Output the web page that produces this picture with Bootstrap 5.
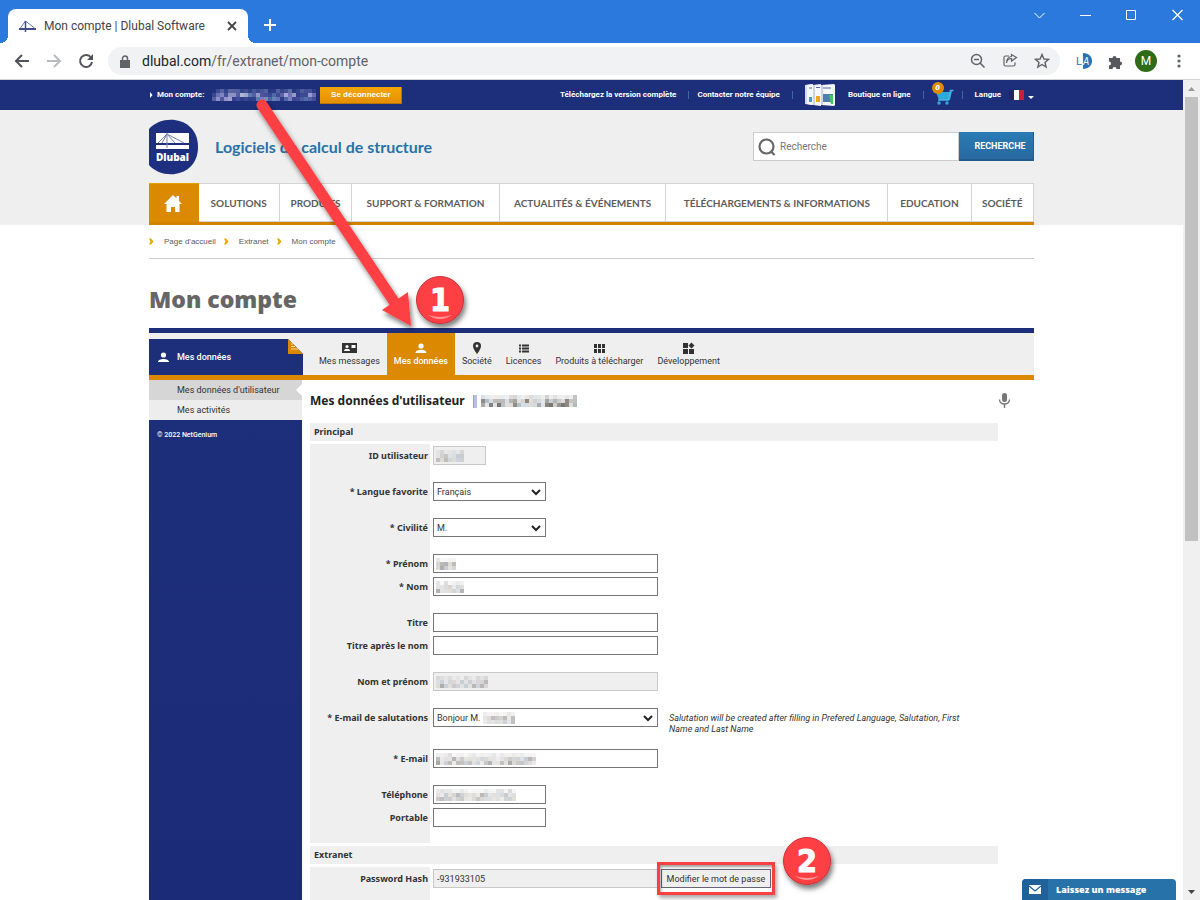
<!DOCTYPE html>
<html lang="fr">
<head>
<meta charset="utf-8">
<meta name="viewport" content="width=device-width, initial-scale=1">
<title>Mon compte | Dlubal Software</title>
<link href="https://cdn.jsdelivr.net/npm/bootstrap@5.3.0/dist/css/bootstrap.min.css" rel="stylesheet">
<style>
:root{--navy:#1d2e7b;--orange:#db8900;--pale:#efefef;--blue:#2872aa}
body{font-family:Roboto,"Liberation Sans",sans-serif;font-size:9px;line-height:12px;color:#333;height:100vh;overflow:hidden}
a{color:inherit;text-decoration:none}
svg{display:block;flex:none}
button{line-height:inherit}
.wrap{width:100%;max-width:885px;margin-left:auto;margin-right:auto}
/* browser frame */
.titlebar{background:#2b79dc;height:43px;padding-left:8px}
.win-tab{background:#fff;height:34px;width:240px;border-radius:8px 8px 0 0;font-size:12px;color:#444;padding:0 11px;position:relative}
.win-tab::before,.win-tab::after{content:"";position:absolute;bottom:0;width:8px;height:8px}
.win-tab::before{left:-8px;background:radial-gradient(circle at 0 0,#2b79dc 8px,#fff 8px)}
.win-tab::after{right:-8px;background:radial-gradient(circle at 100% 0,#2b79dc 8px,#fff 8px)}
.win-ctl{gap:35px;padding:8px 17px 0 0}
.plain{background:none;border:0;padding:0}
.toolbar{height:37px;border-bottom:1px solid #d5d5d5;color:#5f6368;padding:0 15px 0 14px}
.omnibox{background:#f0f2f4;height:28px;border-radius:14px;font-size:14px;padding:0 10px 0 12px;margin-left:14px}
.avatar{width:22px;height:22px;background:#2f6b18;font-size:12px;margin-left:12px}
/* page */
.topbar{background:var(--navy);height:30px;flex:none;color:#fff;font-weight:700;font-size:8px}
.divider{width:1px;height:8px;background:#3f66a8}
.btn-out{background:linear-gradient(#f5a606,#e58f02);border:0;border-bottom:1px solid #b87400;border-right:1px solid #b87400;width:82px;height:17px;color:#fff;font:700 8px "Liberation Sans",sans-serif}
.count{position:absolute;left:0;top:-3px;width:12px;height:12px;border-radius:50%;background:#df8b00;font-style:italic;line-height:12px}
.masthead{background:var(--pale);height:115px;flex:none}
.brand-row{height:73px}
.tagline{font:700 16px/20px Lato,sans-serif;color:var(--blue)}
.search{height:29px;width:281px}
.search-box{background:#fff;border:1px solid #ccc;padding-left:4px}
.search-box input{border:0;outline:0;font:400 10px Roboto,sans-serif;color:#555;min-width:0;background:none}
.search-box input::placeholder{color:#777}
.btn-search{background:linear-gradient(#2a7bb5,#2869a0);border:0;border-right:1px solid #215b8d;border-bottom:2px solid #215b8d;color:#fff;width:75px;font-weight:700;font-size:9px;padding:0 0 0 8px}
.mainnav{height:42px;background:#fff;border-bottom:3px solid #d28200;font:700 10px Lato,sans-serif;color:#5b5b5b}
.mainnav a{border:1px solid #d4d4d4;border-left:0;display:flex;align-items:center;justify-content:center;white-space:nowrap}
.mainnav a:first-child{background:var(--orange);border-color:#e9a000;border-right-color:var(--orange);border-bottom:0}
.crumbs{height:34px;border-bottom:1px solid #ccc;font:400 8px "Liberation Sans",sans-serif;color:#5a5a66}
.crumbs a{margin:0 8px 0 10px}
.page-title{font:800 23px/32px "Open Sans",sans-serif;color:#666;margin:0;padding:24px 0 13px}
.tabs{background:var(--pale);border-top:5px solid var(--navy);border-bottom:5px solid var(--orange);height:52px}
.side-head{width:154px;margin:6px 9px 0 0;background:var(--navy);color:#fff;font-weight:500;padding:0 9px;position:relative}
.side-head .fold{position:absolute;right:0;top:0}
.tabs .tab{padding:8px 7px 0;color:#333}
.tabs .tab.on{background:var(--orange);color:#fff;font-weight:500}
.side{width:153px;background:linear-gradient(#1d2e7b,#1b2b78);color:#fff}
.side a{display:flex;align-items:center;height:20px;padding-left:28px;background:#ededed;color:#333;position:relative}
.side a.on{background:#d6d6d6}
.side a.on::after{content:"";position:absolute;right:0;top:4px;border:6px solid transparent;border-right-color:#fff;border-left:0}
.copy{font-size:7px;font-weight:500;padding:9px 8px}
.content{padding:13px 36px 0 8px}
.heading-row{margin-bottom:14px}
.heading{font:700 12px/16px "Noto Sans",sans-serif;margin:0;color:#222}
.bartick{width:4px;height:13px;background:#b7c1e2;border-left:1px solid #d89a3c}
.band{background:var(--pale);height:18px;padding:0 4px;font:700 9px/17px "Noto Sans",sans-serif;margin:0 0 3px}
.sheet{background:linear-gradient(var(--pale),var(--pale)) 0 0/120px 100% no-repeat;padding:2px 0 16px;margin-bottom:3px}
.line{min-height:19px;display:flex;align-items:flex-start}
.line+.line{margin-top:17px}
.line+.line.near{margin-top:4px}
.line.tall{height:24px}
.line label{width:118px;margin-right:5px;text-align:right;font:700 9px/19px "Noto Sans",sans-serif;color:#333}
.field{position:relative;width:225px}
.field.half{width:113px}
.field.tiny{width:53px}
.field input,.field select{width:100%;height:19px;border:1px solid #767676;border-radius:0;padding:0 3px;font:400 9px Roboto,sans-serif;color:#333;display:block;background-color:#fff}
.field select{background-position:right 4px center;background-size:10px 8px;background-image:url("data:image/svg+xml,%3csvg xmlns='http://www.w3.org/2000/svg' viewBox='0 0 10 8'%3e%3cpath d='M1 2l4 4 4-4' fill='none' stroke='%23222' stroke-width='2'/%3e%3c/svg%3e")}
.field input[readonly]{background:#efefef;border-color:#c8c8c8}
.field .mosaic{position:absolute;left:3px;top:4px}
.field .mosaic.after-text{left:50px}
.hint{font-style:italic;line-height:11px;width:310px;padding-top:5px;margin-left:11px}
.pass-box{margin-left:3px}
.btn-pass{width:110px;height:19px;border:1px solid #667;background:#efefef;padding:0;color:#333;white-space:nowrap;display:block}
.frame{position:absolute;inset:-7px -4px;border:3px solid #f94144;box-shadow:2px 3px 4px #0005,inset 1px 2px 3px #0006;pointer-events:none}
.callouts{position:absolute;inset:0;pointer-events:none}
.chat{position:absolute;right:7px;bottom:0;width:154px;height:21px;background:var(--blue);border:0;border-radius:4px 4px 0 0;color:#fff;font:800 9px "Open Sans",sans-serif;padding:0;overflow:hidden}
.chat .ico{background:#1f6198;width:26px}
.scroll{width:17px;background:#f0f0f0;flex:none}
.thumb{width:13px;height:444px;background:#c1c1c1}
</style>
</head>
<body class="d-flex flex-column">

<header>
  <div class="titlebar d-flex align-items-end">
    <div class="win-tab d-flex align-items-center">
      <svg width="17" height="12" viewBox="0 0 17 12"><path d="M0 9h17" stroke="#414b8c" stroke-width="2"/><path d="M6.500 1v11M6.500 1L1 8.500M6.500 1l9 7" fill="none" stroke="#6a72a6"/><path d="M6.500 1v11" stroke="#414b8c" stroke-width="1.500"/></svg>
      <span class="ms-2">Mon compte | Dlubal Software</span>
      <button class="plain ms-auto" aria-label="Fermer l'onglet"><svg width="10" height="10"><path d="M1 1l8 8M9 1L1 9" stroke="#444" stroke-width="1.800"/></svg></button>
    </div>
    <button class="plain ms-3 mb-2 pb-1" aria-label="Nouvel onglet"><svg width="12" height="12"><path d="M6 0v12M0 6h12" stroke="#fff" stroke-width="2"/></svg></button>
    <div class="win-ctl d-flex ms-auto align-self-start align-items-center">
      <svg width="11" height="14"><path d="M.5 5l5 5 5-5" fill="none" stroke="#fff"/></svg>
      <svg width="11" height="14"><path d="M0 7.500h11" stroke="#fff"/></svg>
      <svg width="11" height="14"><path d="M.5 2.500h9v9h-9z" fill="none" stroke="#fff"/></svg>
      <svg width="11" height="14"><path d="M.5 2l10 10M10.500 2l-10 10" stroke="#fff" stroke-width="1.200"/></svg>
    </div>
  </div>
  <div class="toolbar d-flex align-items-center">
    <button class="plain" aria-label="Retour"><svg width="16" height="14"><path d="M15 7H2M8 1L2 7l6 6" fill="none" stroke="#50545a" stroke-width="2"/></svg></button>
    <button class="plain ms-3" aria-label="Avancer"><svg width="16" height="14"><path d="M1 7h13M8 1l6 6-6 6" fill="none" stroke="#b9bbbe" stroke-width="2"/></svg></button>
    <button class="plain ms-3" aria-label="Actualiser"><svg width="16" height="16"><path d="M13 4.500A6 6 0 1 0 14 9" fill="none" stroke="#50545a" stroke-width="2"/><path d="M15 1v6H9z" fill="#50545a"/></svg></button>
    <div class="omnibox d-flex align-items-center flex-grow-1">
      <svg width="10" height="13"><path d="M0 5h10v8H0z" fill="#5f6368"/><path d="M2.500 5V3.500a2.500 2.500 0 0 1 5 0V5" fill="none" stroke="#5f6368" stroke-width="1.500"/></svg>
      <span class="ms-2 ps-1"><span class="text-dark">dlubal.com</span>/fr/extranet/mon-compte</span>
      <div class="ms-auto d-flex gap-3">
        <svg width="16" height="16"><circle cx="6.500" cy="6.500" r="5" fill="none" stroke="#5f6368" stroke-width="1.500"/><path d="M4 6.500h5M10 10l4.500 4.500" stroke="#5f6368" stroke-width="1.600"/></svg>
        <svg width="16" height="16"><path d="M7 3H3.500A1.500 1.500 0 0 0 2 4.500v7A1.500 1.500 0 0 0 3.500 13h8a1.500 1.500 0 0 0 1.500-1.500V9.500M4.500 10c.5-3 2-4.500 5-4.500V8L14.500 4.500 9.500 1.500V3.500C6 4 4.500 6.500 4.500 10z" fill="none" stroke="#5f6368" stroke-width="1.200"/></svg>
        <svg width="16" height="16"><path d="M8 1.500l1.900 4.500 4.600.4-3.500 3 1.100 4.600L8 11.500 3.900 14 5 9.400l-3.500-3L6.100 6z" fill="none" stroke="#5f6368" stroke-width="1.400"/></svg>
      </div>
    </div>
    <svg class="ms-3" width="16" height="16" viewBox="0 0 16 16"><path d="M7 0c12 0 12 16 0 16z" fill="#2773b4"/><text x="0" y="12" font-family="Roboto" font-size="11" fill="#2773b4">L</text><text x="7" y="12" font-family="Roboto" font-size="10" font-style="italic" fill="#fff">A</text></svg>
    <svg class="ms-3" width="15" height="15"><path d="M1 4h3.500a2 2 0 1 1 4 0H12v3.500a2 2 0 1 1 0 4V15H8.500a2 2 0 0 0-4 0H1v-3.500a2 2 0 0 0 0-4z" fill="#55595e"/></svg>
    <span class="avatar rounded-circle text-white d-flex align-items-center justify-content-center flex-shrink-0">M</span>
    <svg class="ms-3" width="12" height="14" fill="#5f6368"><circle cx="6" cy="2" r="1.600"/><circle cx="6" cy="7" r="1.600"/><circle cx="6" cy="12" r="1.600"/></svg>
  </div>
</header>

<div class="d-flex flex-grow-1 overflow-hidden">
<div class="d-flex flex-column flex-grow-1 position-relative overflow-hidden">

  <div class="topbar">
    <div class="wrap h-100 d-flex align-items-center">
      <svg width="8" height="6"><path d="M1 0l2.500 3L1 6z" fill="#fff"/></svg>
      <a href="#">Mon compte:</a>
      <svg class="mosaic ms-2 me-1" data-w="104" data-tone="light"></svg>
      <button class="btn-out">Se déconnecter</button>
      <div class="ms-auto d-flex align-items-center">
        <a href="#" class="me-2">Téléchargez la version complète</a><i class="divider me-2 ms-1"></i>
        <a href="#" class="me-2">Contacter notre équipe</a><i class="divider ms-1 me-2"></i>
        <svg class="ms-1" width="31" height="24" viewBox="0 0 31 24"><path d="M0 2l7-1v21l-7-1z" fill="#d7dbe6"/><path d="M2 2l6-1v21l-6-1z" fill="#f6f7fa"/><path d="M8 2l8-1v22l-8-1z" fill="#f6f7fa"/><path d="M8 2l2 0v20H8z" fill="#cdd3e1"/><path d="M16 2l13-1 1 1v20l-1 1-13-1z" fill="#f4f6fa"/><path d="M16 2h2v20h-2z" fill="#cdd3e1"/><path d="M4 14h3v5H4z" fill="#3aa0d8"/><path d="M11 13h4v6h-4z" fill="#e9ab22"/><path d="M18 11h10v8H18z" fill="#4f7fae"/><path d="M24 12h4v9h-2z" fill="#45c65c"/><path d="M4 5h3M11 4.500h4M18 5h8" stroke="#5b6b98"/></svg>
        <a href="#" class="ms-2 ps-1 me-2">Boutique en ligne</a><i class="divider ms-1 me-1"></i>
        <span class="position-relative ms-1 me-1"><svg width="22" height="20" viewBox="0 0 22 20"><path d="M20 6l-2 9H7L4 7h14z" fill="#2fa8de"/><path d="M21.500 5.500H18.500L16.500 15H6" fill="none" stroke="#45b4e3" stroke-width="1.500"/><circle cx="7" cy="18" r="1.700" fill="#2fa8de"/><circle cx="15" cy="18" r="1.700" fill="#2fa8de"/></svg><b class="count text-center">0</b></span>
        <i class="divider ms-1 me-2"></i>
        <a href="#" class="d-flex align-items-center ms-1">Langue
        <svg class="ms-2" width="15" height="10"><path d="M0 0h5v10H0z" fill="#22285f"/><path d="M5 0h5v10H5z" fill="#fff"/><path d="M10 0h5v10h-5z" fill="#c8203a"/></svg>
        <svg class="ms-1 mt-1" width="6" height="3"><path d="M0 0h6L3 3z" fill="#fff"/></svg></a>
      </div>
    </div>
  </div>

  <div class="masthead">
    <div class="wrap">
      <div class="brand-row d-flex align-items-center">
        <svg width="50" height="56" viewBox="0 0 50 56"><path d="M0 10C14-6 49-2 49 28S14 62 0 46z" fill="#1d2f7e"/><path d="M7 14h33v10H7zM7 26h33v4H7z" fill="#fff"/><path d="M9 24l9-9 17 9M18 14v15M18 15l-5 9M18 15l8 9" fill="none" stroke="#7581b4"/><text x="23.500" y="42" text-anchor="middle" font-family="Open Sans" font-weight="800" font-size="10" fill="#fff">Dlubal</text></svg>
        <span class="tagline ms-3">Logiciels de calcul de structure</span>
        <form class="search d-flex ms-auto" onsubmit="return false">
          <label class="search-box d-flex align-items-center flex-grow-1 overflow-hidden">
            <svg width="18" height="18"><circle cx="8.500" cy="8.500" r="7" fill="none" stroke="#666" stroke-width="2.200"/><path d="M12.500 13l4 4" stroke="#666" stroke-width="2.200"/></svg>
            <input class="ms-1 p-0 flex-grow-1" type="text" placeholder="Recherche" aria-label="Recherche">
          </label>
          <button class="btn-search">RECHERCHE</button>
        </form>
      </div>
      <nav class="mainnav d-flex">
        <a href="#" style="flex:49 49 0" aria-label="Accueil"><svg width="18" height="17"><path d="M9 0l3.500 3.500V1H15v5l3 3h-2.500v8H11v-5H7v5H2.500V9H0z" fill="#fff"/></svg></a>
        <a href="#" style="flex:81 81 0">SOLUTIONS</a>
        <a href="#" style="flex:72 72 0">PRODUITS</a>
        <a href="#" style="flex:148 148 0">SUPPORT &amp; FORMATION</a>
        <a href="#" style="flex:167 167 0">ACTUALITÉS &amp; ÉVÉNEMENTS</a>
        <a href="#" style="flex:223 223 0">TÉLÉCHARGEMENTS &amp; INFORMATIONS</a>
        <a href="#" style="flex:83 83 0">EDUCATION</a>
        <a href="#" style="flex:62 62 0">SOCIÉTÉ</a>
      </nav>
    </div>
  </div>

  <div class="wrap">
    <nav class="crumbs d-flex align-items-center">
      <svg width="5" height="7"><path d="M0 .5h2l2.500 3-2.500 3H0l1.500-3z" fill="#f0a500"/></svg><a href="#">Page d'accueil</a>
      <svg width="5" height="7"><path d="M0 .5h2l2.500 3-2.500 3H0l1.500-3z" fill="#f0a500"/></svg><a href="#">Extranet</a>
      <svg width="5" height="7"><path d="M0 .5h2l2.500 3-2.500 3H0l1.500-3z" fill="#f0a500"/></svg><a href="#">Mon compte</a>
    </nav>
    <h1 class="page-title">Mon compte</h1>
    <nav class="tabs d-flex">
      <div class="side-head d-flex align-items-center">
        <svg width="11" height="11"><circle cx="5.500" cy="3" r="2.600" fill="#fff"/><path d="M0 10c0-4 11-4 11 0z" fill="#fff"/></svg><span class="ms-2">Mes données</span>
        <svg class="fold" width="15" height="15"><path d="M0 0h15v15z" fill="#efefef"/><path d="M0 0l15 15H0z" fill="#db8900"/><path d="M3 5h2M3 7.500h4M3 10h7" stroke="#f7d38f"/></svg>
      </div>
      <a href="#" class="tab d-flex flex-column align-items-center"><svg width="15" height="14"><path d="M0 2h15v10H0z" fill="#333"/><circle cx="5" cy="5.500" r="1.600" fill="#fff"/><path d="M2 10c0-3 6-3 6 0z" fill="#fff"/><path d="M9.500 4h4v3h-4z" fill="#fff"/></svg>Mes messages</a>
      <a href="#" class="tab on d-flex flex-column align-items-center"><svg width="12" height="14"><circle cx="6" cy="5" r="2.600" fill="#fff"/><path d="M.5 12c0-4.500 11-4.500 11 0z" fill="#fff"/></svg>Mes données</a>
      <a href="#" class="tab d-flex flex-column align-items-center"><svg width="10" height="14"><path d="M5 1a4 4 0 0 0-4 4c0 3 4 8 4 8s4-5 4-8a4 4 0 0 0-4-4z" fill="#333"/><circle cx="5" cy="5" r="1.400" fill="#efefef"/></svg>Société</a>
      <a href="#" class="tab d-flex flex-column align-items-center"><svg width="10" height="14"><path d="M0 4.500h2M3 4.500h7M0 7.500h2M3 7.500h7M0 10.500h2M3 10.500h7" stroke="#333" stroke-width="2"/></svg>Licences</a>
      <a href="#" class="tab d-flex flex-column align-items-center"><svg width="11" height="14"><path d="M0 5h3M4 5h3M8 5h3M0 10h3M4 10h3M8 10h3" stroke="#333" stroke-width="4"/></svg>Produits à télécharger</a>
      <a href="#" class="tab d-flex flex-column align-items-center"><svg width="12" height="14"><path d="M0 2h5v5H0zM0 8h5v5H0zM6 8h5v5H6zM8.500 1.500L11.500 4.500l-3 3-3-3z" fill="#333"/></svg>Développement</a>
    </nav>
  </div>

  <main class="wrap d-flex flex-grow-1">
    <aside class="side flex-shrink-0">
      <a href="#" class="on">Mes données d'utilisateur</a>
      <a href="#">Mes activités</a>
      <div class="copy">© 2022 NetGenium</div>
    </aside>
    <section class="content flex-grow-1">
      <div class="heading-row d-flex align-items-center position-relative">
        <h2 class="heading">Mes données d'utilisateur</h2>
        <i class="bartick ms-2 me-1"></i>
        <svg class="mosaic" data-w="96" data-tone="dark" data-rows="3"></svg>
        <button class="plain position-absolute top-0 start-100" aria-label="Dictée vocale"><svg width="12" height="15"><rect x="4" width="5" height="9" rx="2.500" fill="#777"/><path d="M1.500 6.500c0 6 10 6 10 0M6.500 11v4" fill="none" stroke="#777" stroke-width="1.400"/></svg></button>
      </div>
      <h3 class="band">Principal</h3>
      <div class="sheet">
        <div class="line"><label for="uid">ID utilisateur</label><div class="field tiny"><input id="uid" readonly><svg class="mosaic" data-w="28" data-tone="mid"></svg></div></div>
        <div class="line"><label for="lang">* Langue favorite</label><div class="field half"><select id="lang" class="form-select"><option>Français</option></select></div></div>
        <div class="line"><label for="civ">* Civilité</label><div class="field half"><select id="civ" class="form-select"><option>M.</option></select></div></div>
        <div class="line"><label for="first">* Prénom</label><div class="field"><input id="first"><svg class="mosaic" data-w="20" data-tone="mid"></svg></div></div>
        <div class="line near"><label for="last">* Nom</label><div class="field"><input id="last"><svg class="mosaic" data-w="28" data-tone="mid"></svg></div></div>
        <div class="line"><label for="ttl">Titre</label><div class="field"><input id="ttl"></div></div>
        <div class="line near"><label for="ttl2">Titre après le nom</label><div class="field"><input id="ttl2"></div></div>
        <div class="line"><label for="full">Nom et prénom</label><div class="field"><input id="full" readonly><svg class="mosaic" data-w="52" data-tone="mid"></svg></div></div>
        <div class="line tall"><label for="salut">* E-mail de salutations</label><div class="field"><select id="salut" class="form-select"><option>Bonjour M.</option></select><svg class="mosaic after-text" data-w="32" data-tone="mid"></svg></div><div class="hint">Salutation will be created after filling in Prefered Language, Salutation, First Name and Last Name</div></div>
        <div class="line"><label for="mail">* E-mail</label><div class="field"><input id="mail"><svg class="mosaic" data-w="100" data-tone="mid"></svg></div></div>
        <div class="line"><label for="tel">Téléphone</label><div class="field half"><input id="tel"><svg class="mosaic" data-w="80" data-tone="mid"></svg></div></div>
        <div class="line near"><label for="mob">Portable</label><div class="field half"><input id="mob"></div></div>
      </div>
      <h3 class="band">Extranet</h3>
      <div class="sheet">
        <div class="line"><label for="hash">Password Hash</label><div class="field"><input id="hash" readonly value="-931933105"></div>
          <div class="pass-box position-relative"><button class="btn-pass">Modifier le mot de passe</button><div class="frame"></div></div></div>
      </div>
    </section>
  </main>

  <div class="callouts">
    <svg class="mx-auto overflow-visible" width="885" height="820" viewBox="0 0 885 820">
      <defs><filter id="sh" x="-20%" y="-20%" width="150%" height="150%"><feDropShadow dx="2" dy="4" stdDeviation="2.500" flood-opacity=".5"/></filter></defs>
      <g filter="url(#sh)" fill="#fe4144"><path d="M113 25L246 223" stroke="#fe4144" stroke-width="11" stroke-linecap="round"/><path d="M233 230L259 212 262 246z"/></g>
      <g filter="url(#sh)"><circle cx="291" cy="220" r="23.500" fill="#fe4144" stroke="#c9303c"/><circle cx="658" cy="781" r="23.500" fill="#fe4144" stroke="#c9303c"/></g>
      <path d="M279 235q12 8 24 0q-12 4-24 0zM646 796q12 8 24 0q-12 4-24 0z" fill="#ff9a9a"/>
      <g font-family="DejaVu Sans Condensed" font-weight="700" font-size="32" fill="#fff" stroke="#fff" text-anchor="middle"><text x="291" y="231">1</text><text x="658" y="792">2</text></g>
    </svg>
  </div>
  <button class="chat d-flex align-items-stretch"><span class="ico d-flex align-items-center justify-content-center"><svg width="12" height="9"><path d="M0 0h12v9H0z" fill="#fff"/><path d="M0 1l6 5 6-5" fill="none" stroke="#1f6198" stroke-width="1.300"/></svg></span><span class="ps-2 align-self-center">Laissez un message</span></button>
</div>

<div class="scroll d-flex flex-column align-items-center">
  <svg class="my-1" width="9" height="9"><path d="M1 7h7L4.500 3z" fill="#999"/></svg>
  <div class="thumb"></div>
  <svg class="mt-auto mb-1" width="9" height="9"><path d="M1 3h7L4.500 7z" fill="#444"/></svg>
</div>
</div>

<script src="https://cdn.jsdelivr.net/npm/bootstrap@5.3.0/dist/js/bootstrap.bundle.min.js"></script>
<script>
// Masks personal data with a mosaic of small tinted squares
const tones={light:['#7f86c4','#a7a5d8','#5560a6','#b9bfd9','#6f8fbf','#3e4a95'],dark:['#8d8a88','#b3aea8','#d6d2cc','#a9b6bf','#77736f','#cfd9e2'],mid:['#b9b6b4','#d3d1d2','#a8a6a8','#dcdad4','#c5ccd4','#e0dede']};
let seed=7;const rnd=()=>(seed=(seed*16807)%2147483647)/2147483647;
document.querySelectorAll('.mosaic').forEach(m=>{
  const w=+m.dataset.w,rows=+(m.dataset.rows||3),pal=tones[m.dataset.tone];let s='';
  for(let y=0;y<rows;y++)for(let x=0;x<w;x+=4){
    const edge=y===0;const o=edge?.15+rnd()*.3:.55+rnd()*.45;
    s+=`<rect x="${x}" y="${y*4}" width="4" height="4" fill="${pal[Math.floor(rnd()*pal.length)]}" opacity="${o.toFixed(2)}"/>`;
  }
  m.setAttribute('width',w);m.setAttribute('height',rows*4);m.innerHTML=s;
});
</script>
</body>
</html>
